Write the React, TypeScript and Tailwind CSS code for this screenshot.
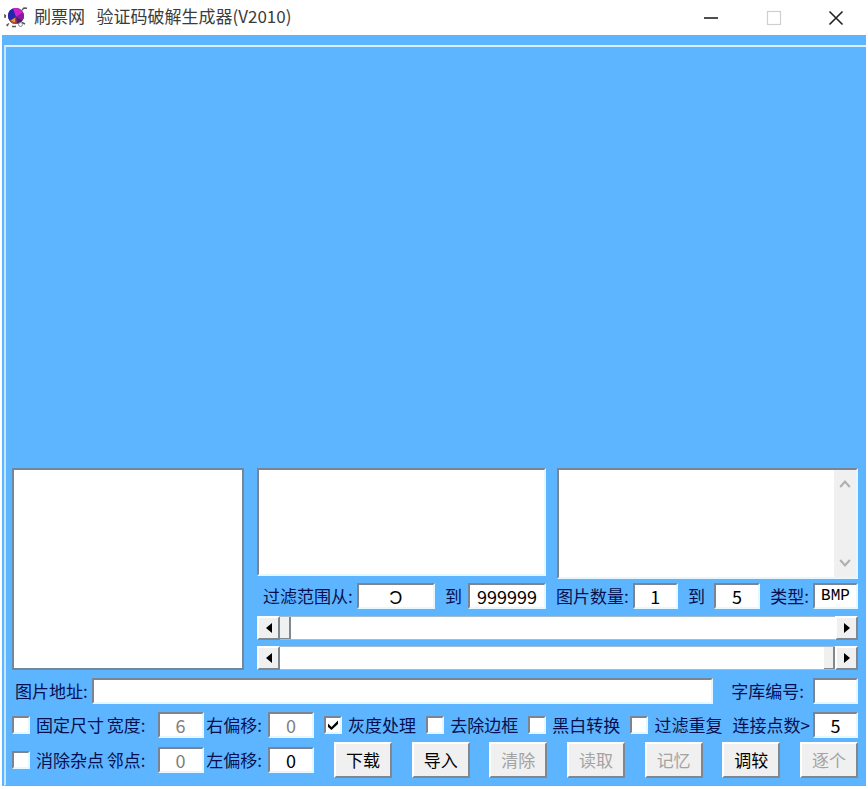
import { useState } from 'react'
import clsx from 'clsx'

const SUNKEN =
  'bg-white border-t-2 border-l-2 border-b-2 border-r-2 border-t-[#7b8490] border-l-[#7b8490] border-b-[#e6f8ff] border-r-[#e6f8ff] rounded-none outline-none'

const RAISED =
  'bg-[#f0f0f0] border-t-2 border-l-2 border-b-2 border-r-2 border-t-white border-l-white border-b-[#7f8890] border-r-[#7f8890]'

const actions = [
  { label: '下载', enabled: true },
  { label: '导入', enabled: true },
  { label: '清除', enabled: false },
  { label: '读取', enabled: false },
  { label: '记忆', enabled: false },
  { label: '调较', enabled: true },
  { label: '逐个', enabled: false },
]

function AppIcon() {
  return (
    <svg viewBox="0 0 24 22" className="w-6 h-[22px]" aria-hidden="true">
      <circle cx="12" cy="9" r="8" fill="#43207c" />
      <path d="M4 9a8 8 0 0 1 5-7.400L12 10 5.500 13.500a8 8 0 0 1-1.500-4.500z" fill="#2326b0" />
      <path d="M9 1.600a8 8 0 0 1 10 4L12 10z" fill="#cf1fd2" />
      <path d="M19 5.600a8 8 0 0 1-.5 8L12 10z" fill="#8a1c9c" />
      <path d="M5.500 13.500 12 10l1 7a8 8 0 0 1-7.500-3.500z" fill="#b4432c" />
      <path d="M7 13.500 11 11v4.500z" fill="#e0a040" />
      <path
        d="M18 3l2-2 3 .3M0 7.500l2 1.500M0 10h2M5 16.500l-2 1.500 1 1M8 19.500h4M18 15.500l3 1.500"
        stroke="#55555c"
        strokeWidth="1.400"
        fill="none"
      />
      <circle cx="16.500" cy="17.500" r="2" fill="#f6f6f6" stroke="#777" strokeWidth="0.800" />
    </svg>
  )
}

function TitleBar() {
  return (
    <header className="h-[35px] flex items-center pl-[2px] bg-white">
      <AppIcon />
      <h1 className="flex-1 pl-[6px] pb-1 text-[17px] leading-6 text-[#3c3c3c] whitespace-pre">
        刷票网{'  '} 验证码破解生成器(V2010)
      </h1>
      <button aria-label="最小化" className="w-[63px] h-full flex items-center justify-center">
        <svg viewBox="0 0 16 16" className="size-4">
          <path d="M1 8h14" stroke="#222" strokeWidth="1.600" />
        </svg>
      </button>
      <button aria-label="最大化" disabled className="w-[63px] h-full flex items-center justify-center">
        <svg viewBox="0 0 16 16" className="size-4">
          <rect x="1.500" y="1.500" width="13" height="13" fill="none" stroke="#cfcfcf" strokeWidth="1.200" />
        </svg>
      </button>
      <button aria-label="关闭" className="w-[61px] h-full flex items-center justify-center">
        <svg viewBox="0 0 16 16" className="size-4">
          <path d="M1.500 1.500l13 13M14.500 1.500l-13 13" stroke="#222" strokeWidth="1.600" />
        </svg>
      </button>
    </header>
  )
}

interface FieldProps {
  id: string
  label: string
  value: string
  width: string
  gap?: string
  disabled?: boolean
  mono?: boolean
}

function Field({ id, label, value, width, gap = 'gap-[6px]', disabled, mono }: FieldProps) {
  const [text, setText] = useState(value)
  return (
    <div className={clsx('flex items-center', gap)}>
      <label htmlFor={id} className="whitespace-nowrap">
        {label}
      </label>
      <input
        id={id}
        type="text"
        value={text}
        disabled={disabled}
        onChange={(e) => setText(e.target.value)}
        className={clsx(
          SUNKEN,
          width,
          'h-[26px] p-0 text-center',
          mono ? 'font-["Liberation_Mono",monospace] text-[16px]' : 'text-[18px]',
          disabled ? 'text-[#808080]' : 'text-black'
        )}
      />
    </div>
  )
}

function Check({ id, label, defaultChecked }: { id: string; label: string; defaultChecked?: boolean }) {
  return (
    <div className="flex items-center gap-[6px]">
      <span className="relative flex">
        <input
          id={id}
          type="checkbox"
          defaultChecked={defaultChecked}
          className={clsx(SUNKEN, 'peer appearance-none size-[18px]')}
        />
        <svg
          viewBox="0 0 18 18"
          className="absolute inset-0 size-[18px] hidden peer-checked:block pointer-events-none"
        >
          <path d="M4 7.500l3.500 3.500L14 4.500v3.500l-6.500 6L4 11z" fill="#000" />
        </svg>
      </span>
      <label htmlFor={id} className="whitespace-nowrap">
        {label}
      </label>
    </div>
  )
}

function ScrollSlider({ label, start }: { label: string; start: number }) {
  const [value, setValue] = useState(start)
  return (
    <div className="flex h-6">
      <button
        aria-label={`${label} 减`}
        onClick={() => setValue(Math.max(0, value - 1))}
        className={clsx(RAISED, 'w-[23px] flex items-center justify-center')}
      >
        <svg viewBox="0 0 6 10" className="w-[6px] h-[10px]">
          <path d="M6 0v10L0 5z" fill="#000" />
        </svg>
      </button>
      <input
        type="range"
        aria-label={label}
        min={0}
        max={999999}
        value={value}
        onChange={(e) => setValue(Number(e.target.value))}
        className="flex-1 min-w-0 appearance-none bg-white border-y border-y-[#a3bccf] outline-none [&::-webkit-slider-thumb]:appearance-none [&::-webkit-slider-thumb]:w-[11px] [&::-webkit-slider-thumb]:h-[22px] [&::-webkit-slider-thumb]:bg-[#f0f0f0] [&::-webkit-slider-thumb]:border-r-2 [&::-webkit-slider-thumb]:border-b [&::-webkit-slider-thumb]:border-[#7f8890]"
      />
      <button
        aria-label={`${label} 加`}
        onClick={() => setValue(Math.min(999999, value + 1))}
        className={clsx(RAISED, 'w-[23px] flex items-center justify-center')}
      >
        <svg viewBox="0 0 6 10" className="w-[6px] h-[10px]">
          <path d="M0 0v10l6-5z" fill="#000" />
        </svg>
      </button>
    </div>
  )
}

function LogBox() {
  return (
    <div className={clsx(SUNKEN, 'flex h-[111px]')}>
      <textarea aria-label="日志" className="flex-1 min-w-0 resize-none outline-none" />
      <div className="w-[22px] flex flex-col justify-between items-center py-2 bg-[#f0f0f0]">
        <button aria-label="向上">
          <svg viewBox="0 0 10 10" className="size-3">
            <path d="M1 7.500l4-4.500 4 4.500" fill="none" stroke="#b0b0b0" strokeWidth="1.800" />
          </svg>
        </button>
        <button aria-label="向下">
          <svg viewBox="0 0 10 10" className="size-3">
            <path d="M1 2.500l4 4.500 4-4.500" fill="none" stroke="#b0b0b0" strokeWidth="1.800" />
          </svg>
        </button>
      </div>
    </div>
  )
}

export default function App() {
  const [url, setUrl] = useState('')

  return (
    <div className='min-h-screen flex flex-col bg-white px-[2px] pb-[3px] font-["Noto_Sans_CJK_SC",sans-serif] text-[17px] leading-6 text-[#06104f]'>
      <TitleBar />
      <main className="flex-1 flex flex-col bg-[#5db4ff] pt-[10px] pl-[2px]">
        <div className="flex-1 flex flex-col border-t-2 border-l-2 border-b border-t-[#d9f0ff] border-l-[#c4e6ff] border-b-[#8aa4bb] pl-[6px] pr-2 pb-[7px]">
          {/* Captcha canvas */}
          <div className="flex-1 min-h-40" />

          {/* Preview and lists */}
          <div className="flex gap-[13px]">
            <div className="w-[232px] shrink-0 bg-white border-2 border-[#71889c]" />
            <div className="flex-1 min-w-0 flex flex-col">
              <div className="flex gap-[11px] items-start">
                <textarea aria-label="结果" className={clsx(SUNKEN, 'block w-[289px] h-[108px] resize-none')} />
                <div className="flex-1 min-w-0">
                  <LogBox />
                </div>
              </div>
              <div className="flex justify-between pl-[6px] pt-1">
                <Field id="from" label="过滤范围从:" value="Ͻ" width="w-[78px]" gap="gap-1" />
                <Field id="to" label="到" value="999999" width="w-[78px]" />
                <Field id="count-from" label="图片数量:" value="1" width="w-[45px]" gap="gap-1" />
                <Field id="count-to" label="到" value="5" width="w-[46px]" gap="gap-[9px]" />
                <Field id="type" label="类型:" value="BMP" width="w-[45px]" gap="gap-1" mono />
              </div>
              <div className="flex flex-col gap-[6px] pt-[7px]">
                <ScrollSlider label="起始" start={0} />
                <ScrollSlider label="结束" start={999999} />
              </div>
            </div>
          </div>

          {/* Address */}
          <div className="flex items-center pt-2 pl-[3px]">
            <label htmlFor="url" className="whitespace-nowrap">
              图片地址:
            </label>
            <input
              id="url"
              type="text"
              value={url}
              onChange={(e) => setUrl(e.target.value)}
              className={clsx(SUNKEN, 'flex-1 min-w-0 h-[26px] ml-1 mr-[18px] px-1')}
            />
            <Field id="font-no" label="字库编号:" value="" width="w-[45px]" gap="gap-[9px]" />
          </div>

          {/* Options */}
          <div className="flex gap-[10px] pt-2">
            <div className="w-[302px] shrink-0 flex items-center justify-between">
              <Check id="fixed" label="固定尺寸" />
              <Field id="width" label="宽度:" value="6" width="w-[46px]" gap="gap-3" disabled />
              <Field id="right" label="右偏移:" value="0" width="w-[46px]" disabled />
            </div>
            <div className="flex-1 flex items-center justify-between">
              <Check id="gray" label="灰度处理" defaultChecked />
              <Check id="border" label="去除边框" />
              <Check id="bw" label="黑白转换" />
              <Check id="dup" label="过滤重复" />
              <Field id="points" label="连接点数>" value="5" width="w-[45px]" gap="gap-[3px]" />
            </div>
          </div>

          {/* Noise and actions */}
          <div className="flex gap-5 pt-1">
            <div className="w-[302px] shrink-0 flex items-center justify-between">
              <Check id="noise" label="消除杂点" />
              <Field id="near" label="邻点:" value="0" width="w-[46px]" gap="gap-3" disabled />
              <Field id="left" label="左偏移:" value="0" width="w-[46px]" />
            </div>
            <div className="flex-1 flex items-center justify-between">
              {actions.map((a) => (
                <button
                  key={a.label}
                  disabled={!a.enabled}
                  className={clsx(RAISED, 'w-[58px] h-9', a.enabled ? 'text-black' : 'text-[#a3a3a3]')}
                >
                  {a.label}
                </button>
              ))}
            </div>
          </div>
        </div>
      </main>
    </div>
  )
}
